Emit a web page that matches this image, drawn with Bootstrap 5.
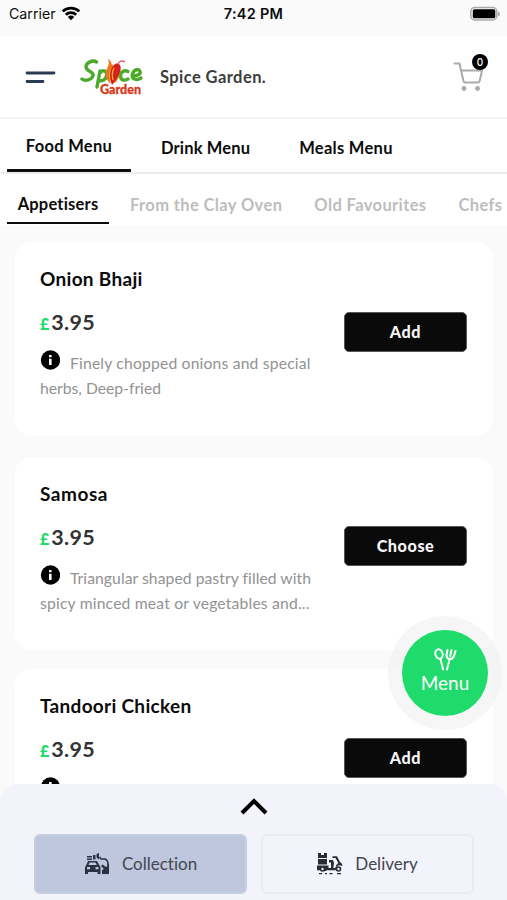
<!DOCTYPE html>
<html lang="en">
<head>
<meta charset="utf-8">
<meta name="viewport" content="width=device-width, initial-scale=1">
<title>Spice Garden</title>
<link href="https://cdn.jsdelivr.net/npm/bootstrap@5.3.0/dist/css/bootstrap.min.css" rel="stylesheet">
<style>
body{font-family:Lato,"Open Sans",sans-serif;font-variant-ligatures:none;background:#fafafa;color:#0c0c0c;height:900px;overflow:hidden}
svg{display:block;flex:none}
.status-bar{height:36px;padding:0 7px 8px 9px;font-family:Inter,sans-serif;font-size:14.2px}
.status-bar .clock{font-weight:600;font-size:14.5px;letter-spacing:.25px}
.app-header{height:83px;padding:0 15px 0 25px;border-bottom:2px solid #f5f5f5}
.brand-name{font-weight:700;font-size:16.5px;color:#3c3c3c;letter-spacing:.42px;margin-left:16px;padding-top:2px}
.cart-count{position:absolute;left:19px;top:-8px;width:16px;height:16px;font:500 10px Inter,sans-serif;background:#000}
.main-tabs{height:55px;padding-left:7px;border-bottom:2px solid #ececec;font-weight:700;font-size:16.5px;letter-spacing:.3px}
.main-tabs .tab-item{height:53px;padding-top:5px}
.main-tabs .tab-item.current{border-bottom:3px solid #0c0c0c;width:124px}
.sub-tabs{height:51px;padding-left:7px;font-weight:700;font-size:16.5px;letter-spacing:.38px;color:#bdbdbd}
.sub-tabs .tab-item{height:50px;padding-top:12px}
.sub-tabs .tab-item.current{border-bottom:2px solid #0c0c0c;width:102px;color:#0c0c0c;letter-spacing:.2px}
.dish-list{padding:17px 14px 0 15px}
.dish{height:194px;border-radius:16px;margin-bottom:21px;padding:25px 26px 0 25px}
.dish + .dish{height:193px;margin-bottom:19px}
.dish-name{font-weight:700;font-size:19px;line-height:24px;letter-spacing:.3px}
.dish-price{font-weight:700;font-size:21.5px;line-height:26px;color:#333;margin-top:18px;letter-spacing:.35px}
.dish-price span{color:#1edb6c;font-weight:900;font-size:16px;margin-right:1.5px}
.dish-text{width:290px;font-size:15.7px;line-height:24.5px;color:#929292;margin-top:13px}
.dish-text svg{display:inline-block;vertical-align:-1px;margin-right:10px}
.ls-a{letter-spacing:.18px}
.ls-b{letter-spacing:.06px}
.btn-dish{width:123px;height:40px;margin-top:45px;background:#0a0a0a;color:#f5f5f5;font-weight:900;font-size:16.2px;letter-spacing:.55px;border-radius:5px;border:1px solid #555}
.dish + .dish .btn-dish{margin-top:44px}
.fab-ring{position:absolute;left:388px;top:616px;width:114px;height:114px;background:rgba(240,240,240,.6)}
.fab-btn{width:86px;height:86px;background:#1edb6c;color:#fff;font-size:19px;line-height:24px;padding-bottom:3px}
.order-sheet{height:116px;background:#f2f3fb;border-radius:18px 18px 0 0;padding:14px 33px 0 34px}
.mode-btn{width:213px;height:60px;border-radius:6px;border:2px solid #ebecf1;font-size:17px;color:#444650;gap:12px}
.mode-btn.chosen{background:#bec7dd;border-color:#c6cee1}
</style>
<script src="https://cdn.jsdelivr.net/npm/bootstrap@5.3.0/dist/js/bootstrap.bundle.min.js"></script>
</head>
<body class="position-relative">
<div class="status-bar d-flex align-items-center justify-content-between position-relative">
  <div class="d-flex align-items-center"><span>Carrier</span>
    <svg style="margin-left:5px" width="20" height="15" viewBox="0 0 20 15"><g fill="none" stroke="#000" stroke-width="2.700"><path d="M1.700 5.400a12 12 0 0 1 16.600 0"/><path d="M4.800 8.700a7.500 7.500 0 0 1 10.400 0"/></g><path d="M6.800 10.900a4.600 4.600 0 0 1 6.400 0L10 14.200Z"/></svg>
  </div>
  <span class="clock position-absolute start-50 translate-middle-x">7:42 PM</span>
  <svg width="31" height="16" viewBox="0 0 31 16"><rect x="1.800" y="1.500" width="26" height="12.500" rx="4" fill="#fafafa" stroke="#aaa" stroke-width="1.500"/><rect x="3.800" y="3.300" width="22.500" height="9" rx="1.500" fill="#000"/><path d="M29 5.500v5q2-.8 2-2.500t-2-2.500Z" fill="#aaa"/></svg>
</div>
<header class="app-header bg-white d-flex align-items-center">
  <svg width="31" height="14" viewBox="0 0 31 14" stroke="#2c3a54" stroke-width="2.800" stroke-linecap="round"><path d="M2 3h27M2 11.500h16"/></svg>
  <svg width="64" height="38" viewBox="0 0 64 38" style="margin-left:24px">
    <g fill="none" stroke="#4caa2b" stroke-width="3.400" stroke-linecap="round" stroke-linejoin="round">
      <path d="M16.500 4C13 1.500 6 4.500 6 9c0 4.500 8 4 7 8.500-1 4.500-8 6-11 3.500"/>
      <path d="M20 13 17 29M20 15c3-4 8-2 6.500 3-1 4-5 6-8 4"/>
      <path d="M48 13.500c-4-2-8 1-7.500 5 .5 4 4 4.500 7.500 2.500"/>
      <path d="M53 17.500c4 .5 8-1 7-4s-6-2.500-7.500 2.500 4 7 8.500 4"/>
    </g>
    <path d="M29 3c1 4-4 7-2 12 1 4 1 7 6 10 6-1 7-7 6-12-2-4-6-5-10-10Z" fill="#f5a623"/>
    <path d="M28 1c5 3 2 6 5 8-5 4-5 9-2 17-4-3-6-7-5-12 2-4 4-7 2-13Z" fill="#ee7420"/>
    <path d="M35 6c5-2 7 3 5 8-2 6-5 10-8 13-2-5-4-16 3-21Z" fill="#d5201f"/>
    <path d="M34 10c-2 4-2 8-1 12" stroke="#f5b030" stroke-width="1.300" fill="none"/>
    <path d="M38 6c1-3 4-4 7-2" stroke="#e06070" stroke-width="1.500" fill="none"/>
    <text x="20" y="35.500" font-family="Lato" font-size="12.500" font-weight="900" fill="#d83a1e" stroke="#d83a1e" stroke-width=".3" textLength="41" lengthAdjust="spacingAndGlyphs">Garden</text>
  </svg>
  <span class="brand-name">Spice Garden.</span>
  <div class="position-relative ms-auto me-2">
    <svg width="31" height="29" viewBox="0 0 31 29"><g fill="none" stroke="#aaa" stroke-width="2" stroke-linecap="round" stroke-linejoin="round"><path d="M1.500 1.500H6.500L10.500 19q.4 1.500 2 1.500h12q1.700 0 2.200-1.600L29 8.500H8"/></g><circle cx="11" cy="26.500" r="2.400" fill="#aaa"/><circle cx="24.500" cy="26.500" r="2.400" fill="#aaa"/></svg>
    <span class="cart-count rounded-circle text-white d-flex align-items-center justify-content-center">0</span>
  </div>
</header>
<nav class="main-tabs bg-white d-flex">
  <div class="tab-item current d-flex align-items-center justify-content-center">Food Menu</div>
  <div class="tab-item d-flex align-items-center" style="margin-left:30px;letter-spacing:.15px">Drink Menu</div>
  <div class="tab-item d-flex align-items-center" style="margin-left:49px">Meals Menu</div>
</nav>
<nav class="sub-tabs bg-white d-flex overflow-hidden text-nowrap">
  <div class="tab-item current d-flex align-items-center justify-content-center">Appetisers</div>
  <div class="tab-item d-flex align-items-center" style="margin-left:21px">From the Clay Oven</div>
  <div class="tab-item d-flex align-items-center" style="margin-left:32px">Old Favourites</div>
  <div class="tab-item d-flex align-items-center" style="margin-left:32px">Chefs</div>
</nav>
<main class="dish-list">
  <article class="dish bg-white d-flex justify-content-between align-items-start">
    <div><div class="dish-name">Onion Bhaji</div><div class="dish-price"><span>£</span>3.95</div>
      <div class="dish-text"><svg width="20" height="20" viewBox="0 0 20 20"><circle cx="10.500" cy="10" r="9.700"/><path d="M9 8.700h2.600V15H9zM9 5h2.600v2.300H9z" fill="#fff"/></svg><span class="ls-a">Finely chopped onions and special</span><br>herbs, Deep-fried</div></div>
    <button class="btn btn-dish p-0">Add</button>
  </article>
  <article class="dish bg-white d-flex justify-content-between align-items-start">
    <div><div class="dish-name" style="letter-spacing:.55px">Samosa</div><div class="dish-price"><span>£</span>3.95</div>
      <div class="dish-text"><svg width="20" height="20" viewBox="0 0 20 20"><circle cx="10.500" cy="10" r="9.700"/><path d="M9 8.700h2.600V15H9zM9 5h2.600v2.300H9z" fill="#fff"/></svg><span class="ls-b">Triangular shaped pastry filled with</span><br><span class="ls-a">spicy minced meat or vegetables and...</span></div></div>
    <button class="btn btn-dish p-0">Choose</button>
  </article>
  <article class="dish bg-white d-flex justify-content-between align-items-start">
    <div><div class="dish-name">Tandoori Chicken</div><div class="dish-price"><span>£</span>3.95</div>
      <div class="dish-text"><svg width="20" height="20" viewBox="0 0 20 20"><circle cx="10.500" cy="10" r="9.700"/><path d="M9 8.700h2.600V15H9zM9 5h2.600v2.300H9z" fill="#fff"/></svg></div></div>
    <button class="btn btn-dish p-0">Add</button>
  </article>
</main>
<div class="fab-ring rounded-circle d-flex align-items-center justify-content-center">
  <div class="fab-btn rounded-circle d-flex flex-column align-items-center justify-content-center">
    <svg width="24" height="23" viewBox="0 0 24 23" fill="none" stroke="#fff" stroke-width="2" stroke-linecap="round" stroke-linejoin="round"><ellipse cx="6" cy="6" rx="3.600" ry="4.800" transform="rotate(-15 6 6)"/><path d="M7.500 11 10 21.500M14.500 2l-1 5q0 3.500 3 4t4.500-3L22.500 3M18.500 2l-1.300 6M16.500 11.500 14 21.500"/></svg>
    <span>Menu</span>
  </div>
</div>
<footer class="order-sheet fixed-bottom">
  <svg class="mx-auto" width="28" height="17" viewBox="0 0 28 17" fill="none" stroke="#000" stroke-width="4"><path d="M2 15 14 3l12 12"/></svg>
  <div class="d-flex justify-content-between" style="margin-top:19px">
    <div class="mode-btn chosen d-flex align-items-center justify-content-center">
      <svg width="26" height="22" viewBox="0 0 26 22" fill="#2a3245"><path d="M3 3h5v1.500H3zM3 5.500h5V7H3zM9 2h2.500v4.500H9zM12.500 1l2.500-1v6.500l-2.500-2z"/><path d="M2 12.500 4 8h9l2.500 4.500 1 1.500v7h-3v-2H4v2H1v-7Zm2.500-.5h8.300l-1.300-2.400H5.600ZM3 14v2.300h3V14Zm8.500 0v2.300h3V14Z" fill-rule="evenodd"/><path d="M18 21v-4l2-1-3-3 1.500-1.500L22 14q2-1 1-4l2 2v9Z"/><path d="M15.500 4 17 6h4q3 1 3.200 6" stroke="#2a3245" stroke-width="1.500" fill="none"/></svg>
      <span>Collection</span>
    </div>
    <div class="mode-btn d-flex align-items-center justify-content-center">
      <svg width="26" height="22" viewBox="0 0 26 22" fill="#292b36"><path d="M1 0h9v5H1zM1 6h9v5.500H1zM0 12.500h11.500V15H14V9.500h-2V7h4l1 3-.7 5h2q.5-3.500 3-5L18.500 5h-3V3.300h4.500L23 9q2.500 1.500 2.500 4L22 12.300q-3 .5-3.300 5h-9q-2 2-4 0H0Z"/><path d="M4 0v2h3V0" fill="#f2f3fb"/><circle cx="5.500" cy="16" r="2.800"/><circle cx="21.500" cy="16" r="2.800"/><circle cx="5.500" cy="16" r="1.200" fill="#f2f3fb"/><circle cx="21.500" cy="16" r="1.200" fill="#f2f3fb"/><path d="M2 20.700h3M8 20.700h2M12.500 20.700h3M20 20.700h4" stroke="#292b36" stroke-width="1.200"/></svg>
      <span>Delivery</span>
    </div>
  </div>
</footer>
</body>
</html>
